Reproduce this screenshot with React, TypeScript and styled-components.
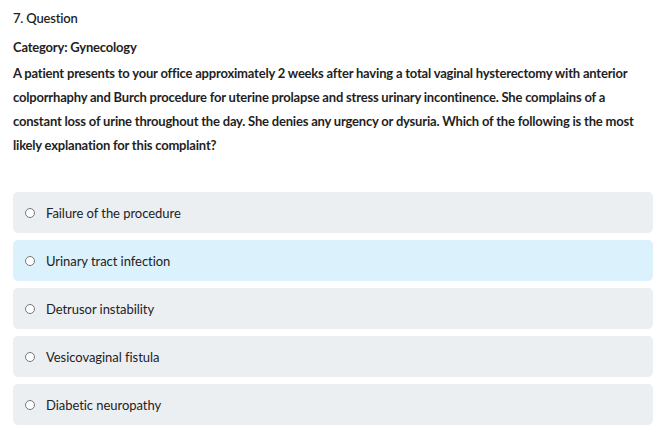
import React, { useState } from 'react';
import styled, { createGlobalStyle } from 'styled-components';

const GlobalStyle = createGlobalStyle`
  body {
    margin: 0;
    background: #ffffff;
    font-family: Lato, "Open Sans", Arial, sans-serif;
    color: #1f1f1f;
    letter-spacing: -0.2px;
  }
`;

const Page = styled.div`
  padding: 6px 10px 0 13px;
`;

const Title = styled.div`
  font-size: 13px;
  font-weight: 600;
  line-height: 24px;
  margin-bottom: 5px;
`;

const Category = styled.div`
  font-size: 13px;
  font-weight: 700;
  line-height: 24px;
  margin-bottom: 2px;
`;

const Stem = styled.p`
  margin: 0 0 35px;
  font-size: 13px;
  font-weight: 700;
  line-height: 24px;
`;

const Options = styled.div`
  display: flex;
  flex-direction: column;
  gap: 7px;
`;

const Option = styled.label<{ $hover?: boolean }>`
  display: flex;
  align-items: center;
  gap: 11px;
  height: 41px;
  padding: 0 12px;
  border-radius: 5px;
  background: ${p => (p.$hover ? '#dbf1fb' : '#eceff2')};
  font-size: 13px;
  letter-spacing: -0.05px;
  color: #222;
  cursor: pointer;
`;

const Radio = styled.span<{ $checked?: boolean }>`
  width: 10px;
  height: 10px;
  box-sizing: border-box;
  border-radius: 50%;
  border: 1px solid #777;
  background: #fff;
  box-shadow: ${p => (p.$checked ? 'inset 0 0 0 2px #fff, inset 0 0 0 5px #333' : 'none')};
`;

const choices = [
  'Failure of the procedure',
  'Urinary tract infection',
  'Detrusor instability',
  'Vesicovaginal fistula',
  'Diabetic neuropathy',
];

const App = () => {
  const [selected, setSelected] = useState<number | null>(null);
  const [hovered, setHovered] = useState<number | null>(1);

  return (
    <Page>
      <GlobalStyle />
      <Title>7. Question</Title>
      <Category>Category: Gynecology</Category>
      <Stem>
        A patient presents to your office approximately 2 weeks after having a total vaginal
        hysterectomy with anterior colporrhaphy and Burch procedure for uterine prolapse and stress
        urinary incontinence. She complains of a constant loss of urine throughout the day. She
        denies any urgency or dysuria. Which of the following is the most likely explanation for
        this complaint?
      </Stem>
      <Options>
        {choices.map((c, i) => (
          <Option
            key={c}
            $hover={hovered === i}
            onMouseEnter={() => setHovered(i)}
            onClick={() => setSelected(i)}
          >
            <Radio $checked={selected === i} />
            {c}
          </Option>
        ))}
      </Options>
    </Page>
  );
};

export default App;
